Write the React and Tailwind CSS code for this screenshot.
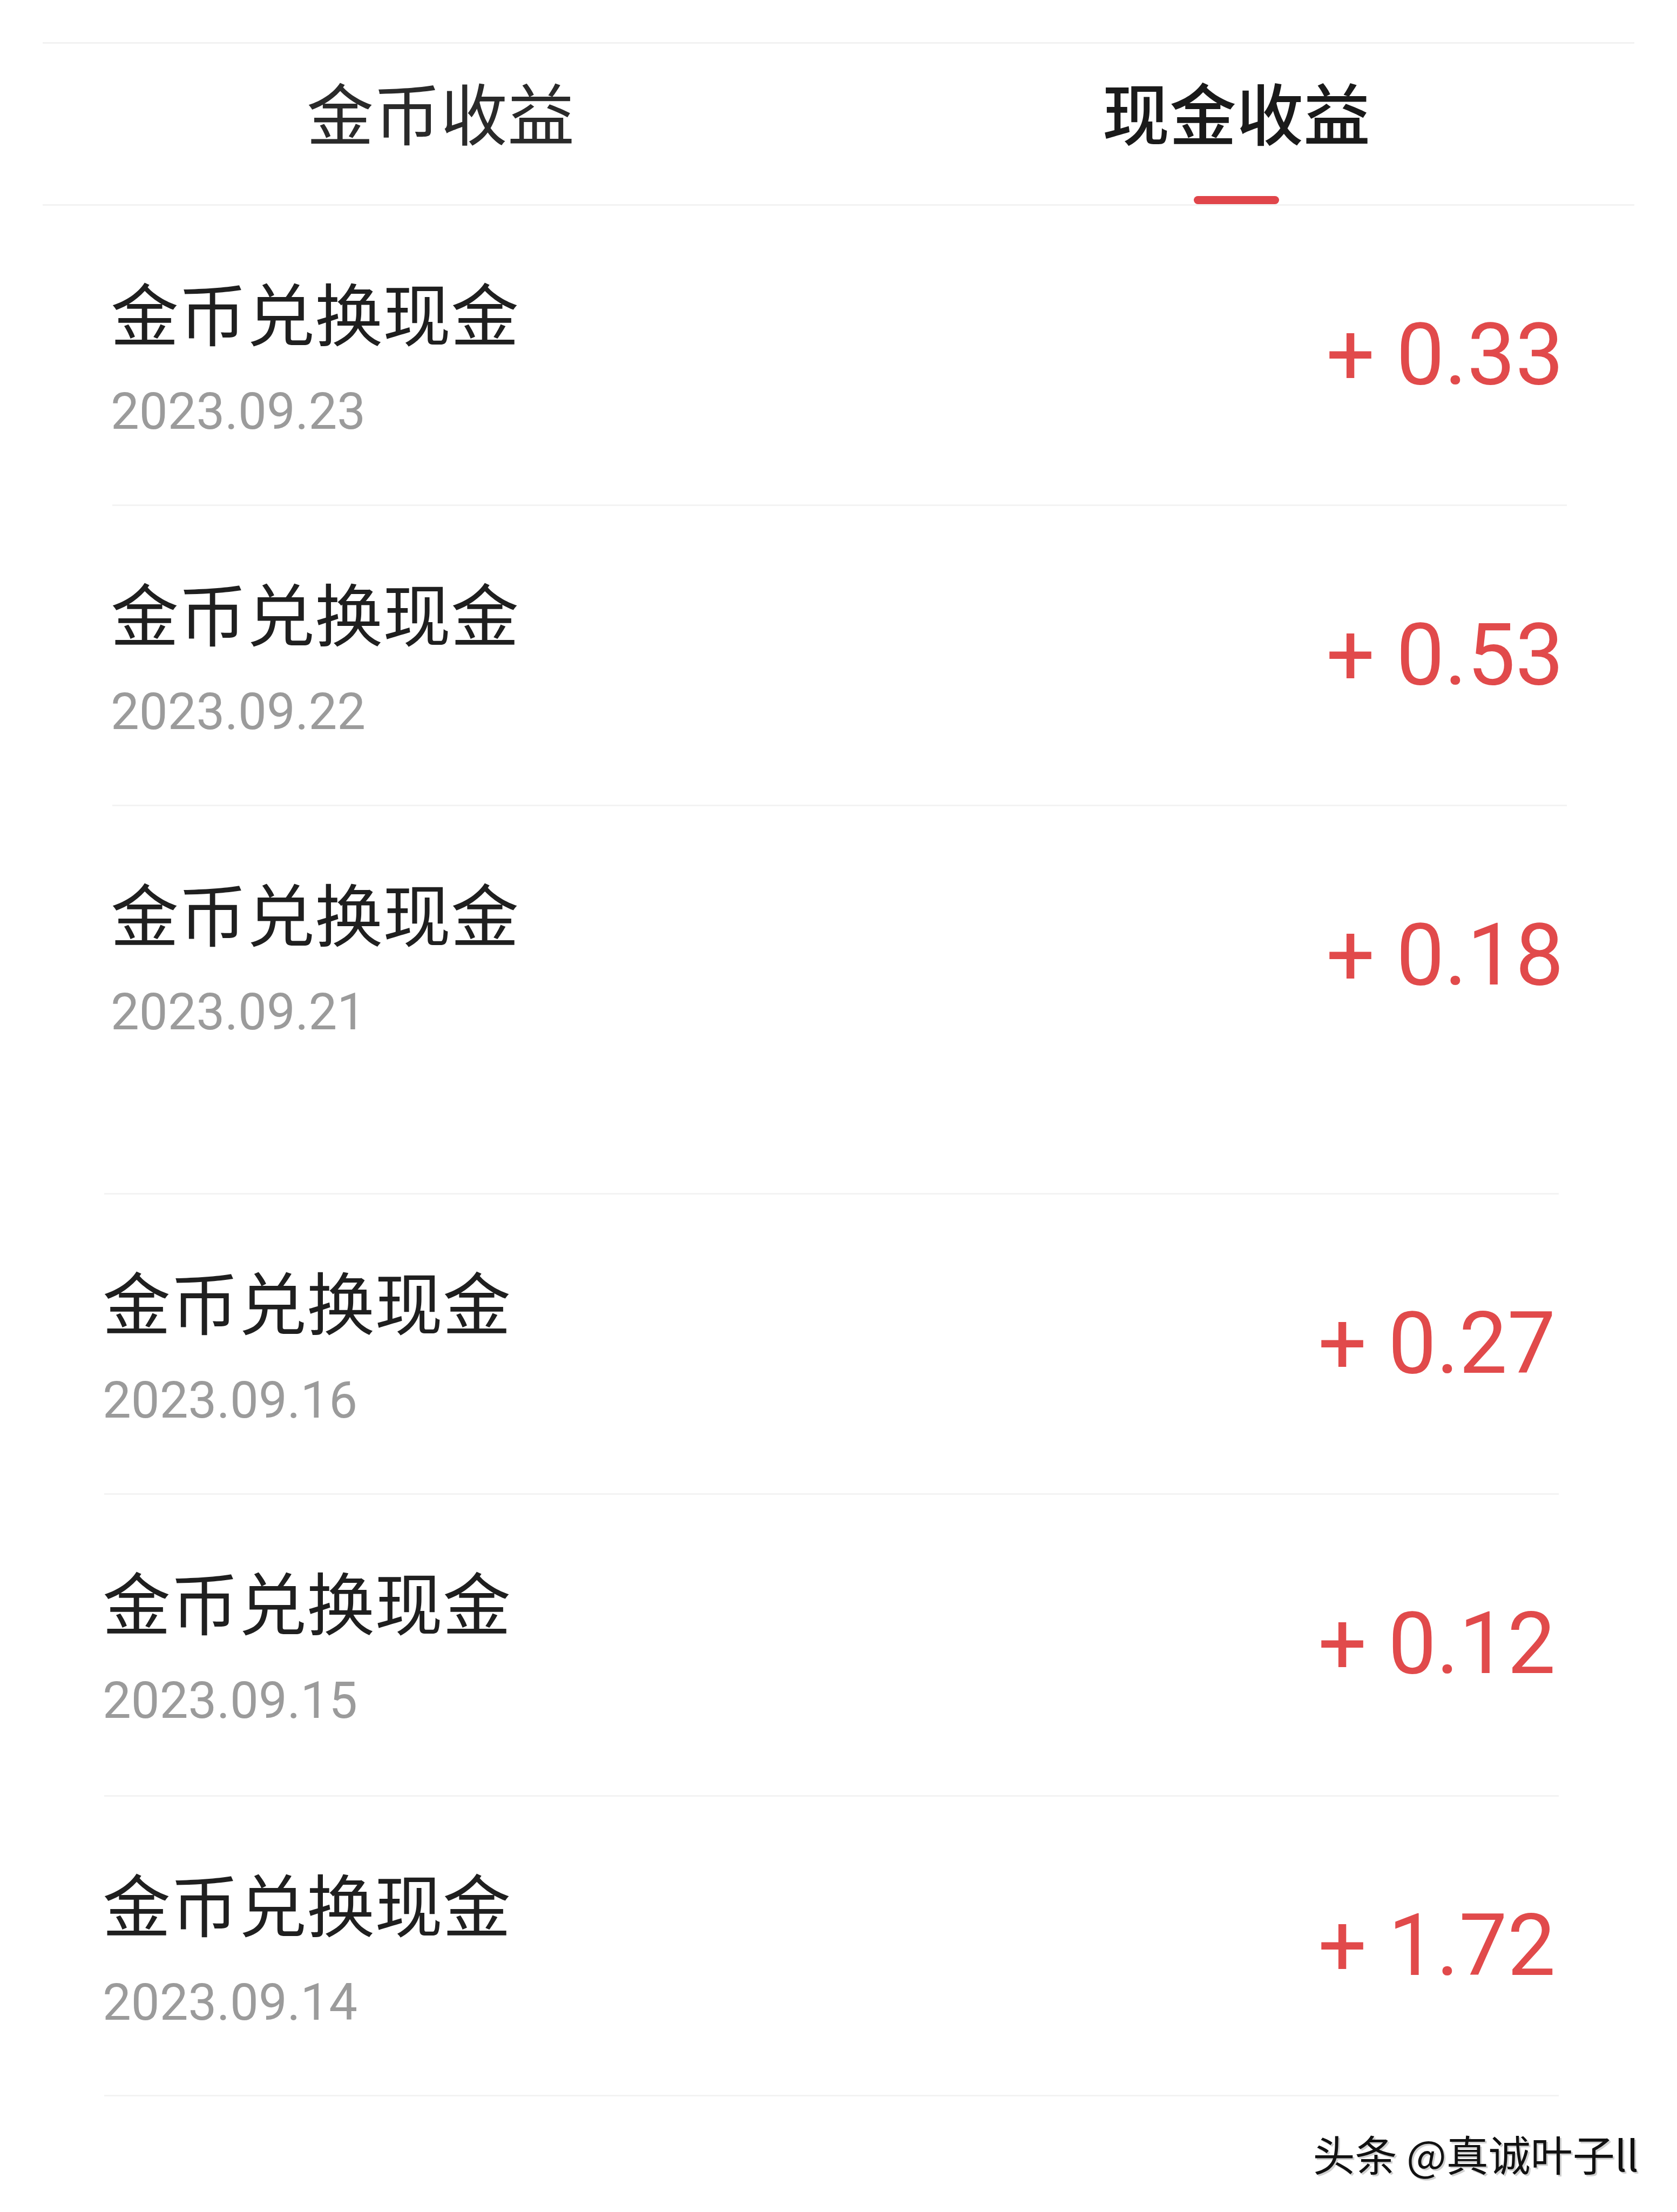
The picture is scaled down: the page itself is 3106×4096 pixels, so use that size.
import React from 'react';

const rows = [
  { date: '2023.09.23', amount: '0.33', h: 'h-[553px]', shift: false, line: 'border-b-[3px]' },
  { date: '2023.09.22', amount: '0.53', h: 'h-[553px]', shift: false, line: 'border-b-[3px]' },
  { date: '2023.09.21', amount: '0.18', h: 'h-[716px]', shift: false, line: '' },
  { date: '2023.09.16', amount: '0.27', h: 'h-[553px]', shift: true, line: 'border-y-[3px]' },
  { date: '2023.09.15', amount: '0.12', h: 'h-[556px]', shift: true, line: 'border-b-[3px]' },
  { date: '2023.09.14', amount: '1.72', h: 'h-[552px]', shift: true, line: 'border-b-[3px]' },
];

const cjk = "font-['Noto_Sans_CJK_SC','Noto_Sans',sans-serif]";
const num = "font-['Roboto','Noto_Sans',sans-serif]";

const Row = ({ date, amount, h, shift, line }) => (
  <div className={`${shift ? 'ml-[193px]' : 'ml-[208px]'} w-[2694px] ${line} border-[#f3f3f3]`}>
    <div className={`${h} flex items-start justify-between pt-[132px]`}>
      {/* 左侧：标题 + 日期 */}
      <div className="flex flex-col -ml-[3px]">
        <span className={`${cjk} text-[126px] leading-none text-[#1f1f1f]`}>金币兑换现金</span>
        <span className={`${num} mt-[76px] text-[94px] leading-none text-[#9b9b9b]`}>{date}</span>
      </div>
      {/* 右侧：金额 */}
      <span className={`${num} mt-[64px] mr-[6px] text-[159px] leading-none text-[#e14a4b]`}>
        +&nbsp;{amount}
      </span>
    </div>
  </div>
);

export default function App() {
  return (
    <div className="w-[3106px] h-[4096px] bg-white overflow-hidden pt-[78px]">
      {/* 顶部标签 */}
      <div className="mx-[79px] h-[303px] flex border-y-[3px] border-[#f2f2f2]">
        <div className="flex-1 flex flex-col items-center pt-[62px]">
          <span className={`${cjk} text-[124px] leading-none text-[#2a2a2a]`}>金币收益</span>
        </div>
        <div className="flex-1 flex flex-col items-center pt-[62px]">
          <span className={`${cjk} text-[124px] leading-none font-medium text-[#1a1a1a]`}>现金收益</span>
          <div className="mt-auto w-[158px] h-[15px] rounded-full bg-[#e0454a]" />
        </div>
      </div>

      {/* 收益列表 */}
      <div className="flex flex-col">
        {rows.map((r) => (
          <Row key={r.date} {...r} />
        ))}
      </div>

      {/* 水印 */}
      <div className="flex justify-end pr-[71px] mt-[66px]">
        <span className={`${cjk} text-[78px] leading-none text-[#111] [text-shadow:3px_3px_0_#d0d0d0]`}>
          头条 @真诚叶子ll
        </span>
      </div>
    </div>
  );
}
